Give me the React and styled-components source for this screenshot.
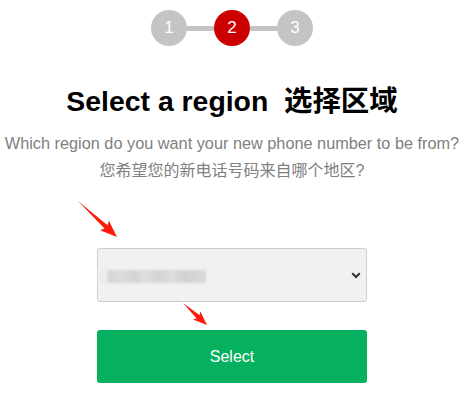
import React from "react";
import styled, { createGlobalStyle } from "styled-components";

const Global = createGlobalStyle`
  html, body { margin: 0; padding: 0; background: #fff; }
  body { font-family: "Liberation Sans", "Noto Sans CJK SC", Arial, sans-serif; }
`;

const Page = styled.div`
  position: relative;
  width: 464px;
  height: 401px;
  display: flex;
  flex-direction: column;
  align-items: center;
  overflow: visible;
`;

const Stepper = styled.div`
  display: flex;
  align-items: center;
  margin-top: 10px;
`;

const Step = styled.div`
  width: 36px;
  height: 36px;
  border-radius: 50%;
  background: ${(p) => (p.$active ? "#cc0000" : "#c4c4c4")};
  color: #fff;
  display: flex;
  align-items: center;
  justify-content: center;
  font-size: 17px;
  font-family: "Liberation Sans", Arial, sans-serif;
`;

const Connector = styled.div`
  width: 27px;
  height: 5px;
  background: #c4c4c4;
`;

const Title = styled.h1`
  margin: 38px 0 0;
  font-size: 28.4px;
  line-height: 34px;
  font-weight: bold;
  color: #000;
  white-space: pre;
  font-family: "Liberation Sans", "Noto Sans CJK SC", Arial, sans-serif;
`;

const Subtitle = styled.p`
  margin: ${(p) => p.$mt}px 0 0;
  font-size: ${(p) => p.$size}px;
  line-height: 20px;
  color: #808080;
  white-space: nowrap;
  font-family: "Liberation Sans", "Noto Sans CJK SC", Arial, sans-serif;
`;

const SelectBox = styled.div`
  margin-top: 67px;
  box-sizing: border-box;
  width: 270px;
  height: 54px;
  background: #f1f1f1;
  border: 1px solid #cdcdcd;
  border-radius: 3px;
  display: flex;
  align-items: center;
  justify-content: space-between;
  padding: 0 5px 0 0;
`;

const Blurred = styled.div`
  width: 108px;
  height: 13px;
  margin-top: 3px;
  background: linear-gradient(
    90deg,
    #ececec 0%,
    #ececec 8%,
    #d6d6d6 10%,
    #dcdcdc 22%,
    #d4d4d4 34%,
    #e0e0e0 44%,
    #d3d3d3 56%,
    #dedede 68%,
    #d2d2d2 80%,
    #dadada 100%
  );
  filter: blur(0.8px);
`;

const Button = styled.button`
  margin-top: 28px;
  width: 270px;
  height: 53px;
  border: none;
  border-radius: 3px;
  background: #05b05e;
  color: #fff;
  font-size: 16px;
  font-family: "Liberation Sans", Arial, sans-serif;
  cursor: pointer;
`;

const Arrow = styled.svg`
  position: absolute;
  left: ${(p) => p.$x}px;
  top: ${(p) => p.$y}px;
  overflow: visible;
`;

function RedArrow({ x1, y1, x2, y2, head = 15, barb = 6.5 }) {
  const dx = x2 - x1;
  const dy = y2 - y1;
  const L = Math.sqrt(dx * dx + dy * dy);
  const ang = (Math.atan2(dy, dx) * 180) / Math.PI;
  const pts = [
    [0, 0],
    [L - head, 2.2],
    [L - head - 2, barb],
    [L, 0],
    [L - head - 2, -barb],
    [L - head, -2.2],
  ]
    .map((p) => p.join(","))
    .join(" ");
  return (
    <Arrow $x={x1} $y={y1} width="1" height="1">
      <g transform={`rotate(${ang})`}>
        <polygon points={pts} fill="#ff1a0a" />
      </g>
    </Arrow>
  );
}

const Chevron = () => (
  <svg width="10" height="7" viewBox="0 0 10 7">
    <path d="M1.2 1.2 L5 5 L8.8 1.2" fill="none" stroke="#333" strokeWidth="2" />
  </svg>
);

export default function App() {
  return (
    <>
      <Global />
      <Page>
        <Stepper>
          <Step>1</Step>
          <Connector />
          <Step $active>2</Step>
          <Connector />
          <Step>3</Step>
        </Stepper>
        <Title>{"Select a region  选择区域"}</Title>
        <Subtitle $mt={15} $size={16.3}>
          Which region do you want your new phone number to be from?
        </Subtitle>
        <Subtitle $mt={8} $size={16}>
          您希望您的新电话号码来自哪个地区?
        </Subtitle>
        <SelectBox>
          <Blurred />
          <Chevron />
        </SelectBox>
        <Button>Select</Button>
        <RedArrow x1={78} y1={201} x2={117} y2={237} />
        <RedArrow x1={183} y1={303} x2={207} y2={325} head={12} barb={5.5} />
      </Page>
    </>
  );
}
